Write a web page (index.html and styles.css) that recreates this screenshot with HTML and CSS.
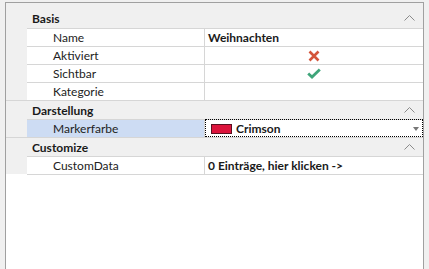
FILE: index.html
```html
<!DOCTYPE html>
<html lang="de">
<head>
  <meta charset="UTF-8" />
  <title>Eigenschaften</title>
  <link rel="stylesheet" href="styles.css">
</head>
<body>
  <div class="grid">

    <div class="category first">
      <div class="cat-head">
        <span class="cat-title">Basis</span>
        <svg class="chevron" width="11" height="6" viewBox="0 0 11 6"><polyline points="0.5,5.5 5.5,0.5 10.5,5.5" /></svg>
      </div>
      <div class="item">
        <div class="gutter"></div>
        <div class="name">Name</div>
        <div class="value bold">Weihnachten</div>
      </div>
      <div class="item">
        <div class="gutter"></div>
        <div class="name">Aktiviert</div>
        <div class="value center">
          <svg width="12" height="12" viewBox="0 0 12 12"><path class="icon-x" d="M1.5,1.5 L10.5,10.5 M10.5,1.5 L1.5,10.5" /></svg>
        </div>
      </div>
      <div class="item">
        <div class="gutter"></div>
        <div class="name">Sichtbar</div>
        <div class="value center">
          <svg width="14" height="11" viewBox="0 0 14 11"><polyline class="icon-check" points="1.2,5.5 5,9 12.8,1.5" /></svg>
        </div>
      </div>
      <div class="item">
        <div class="gutter"></div>
        <div class="name">Kategorie</div>
        <div class="value"></div>
      </div>
    </div>

    <div class="category">
      <div class="cat-head">
        <span class="cat-title">Darstellung</span>
        <svg class="chevron" width="11" height="6" viewBox="0 0 11 6"><polyline points="0.5,5.5 5.5,0.5 10.5,5.5" /></svg>
      </div>
      <div class="item selected">
        <div class="gutter"></div>
        <div class="name">Markerfarbe</div>
        <div class="value bold focus">
          <span class="swatch"></span>
          <span class="grow">Crimson</span>
          <span class="drop-arrow"></span>
        </div>
      </div>
    </div>

    <div class="category last">
      <div class="cat-head">
        <span class="cat-title">Customize</span>
        <svg class="chevron" width="11" height="6" viewBox="0 0 11 6"><polyline points="0.5,5.5 5.5,0.5 10.5,5.5" /></svg>
      </div>
      <div class="item">
        <div class="gutter"></div>
        <div class="name">CustomData</div>
        <div class="value bold">0 Einträge, hier klicken -&gt;</div>
      </div>
    </div>

  </div>
</body>
</html>
```

FILE: styles.css
```css
* {
  margin: 0;
  padding: 0;
  box-sizing: border-box;
}

body {
  background: #f0f0f0;
  font-family: 'Lato', 'Noto Sans', sans-serif;
  font-size: 12px;
  color: #1a1a1a;
  padding: 2px 5px 0 5px;
  height: 269px;
  display: flex;
  flex-direction: column;
  overflow: hidden;
}

.grid {
  flex: 1;
  background: #ffffff;
  border: 1px solid #a0a0a0;
  border-bottom: none;
}

.category {
  border-bottom: 1px solid #d6d6d6;
}

.category.last {
  border-bottom: none;
}

.cat-head {
  display: flex;
  align-items: center;
  height: 18px;
  background: #f0f0f0;
  padding: 0 8px 0 26px;
  font-weight: 700;
}

.category.first .cat-head {
  height: 25px;
  padding-top: 5px;
}

.cat-title {
  flex: 1;
}

.chevron polyline {
  fill: none;
  stroke: #8a8a8a;
  stroke-width: 1;
}

.item {
  display: flex;
  height: 18px;
}

.gutter {
  width: 21px;
  background: #f0f0f0;
}

.name {
  width: 178px;
  padding-left: 26px;
  border-top: 1px solid #d6d6d6;
  border-right: 1px solid #d6d6d6;
  display: flex;
  align-items: center;
  color: #222;
}

.value {
  flex: 1;
  padding-left: 3px;
  border-top: 1px solid #d6d6d6;
  display: flex;
  align-items: center;
}

.last .name,
.last .value {
  border-bottom: 1px solid #d6d6d6;
  height: 19px;
}

.value.center {
  justify-content: center;
  padding-left: 0;
}

.bold {
  font-weight: 700;
}

.icon-x {
  fill: none;
  stroke: #d4553a;
  stroke-width: 2.6;
}

.icon-check {
  fill: none;
  stroke: #3fa57a;
  stroke-width: 2.8;
}

.selected .name {
  background: #cddcf3;
}

.selected .value {
  outline: 1px dotted #000;
  outline-offset: -1px;
  padding-left: 6px;
  padding-right: 4px;
}

.swatch {
  width: 21px;
  height: 10px;
  background: #dc143c;
  border: 1px solid #5a1020;
  margin-right: 4px;
}

.grow {
  flex: 1;
}

.drop-arrow {
  width: 0;
  height: 0;
  border-left: 3.5px solid transparent;
  border-right: 3.5px solid transparent;
  border-top: 4px solid #777;
}
```
